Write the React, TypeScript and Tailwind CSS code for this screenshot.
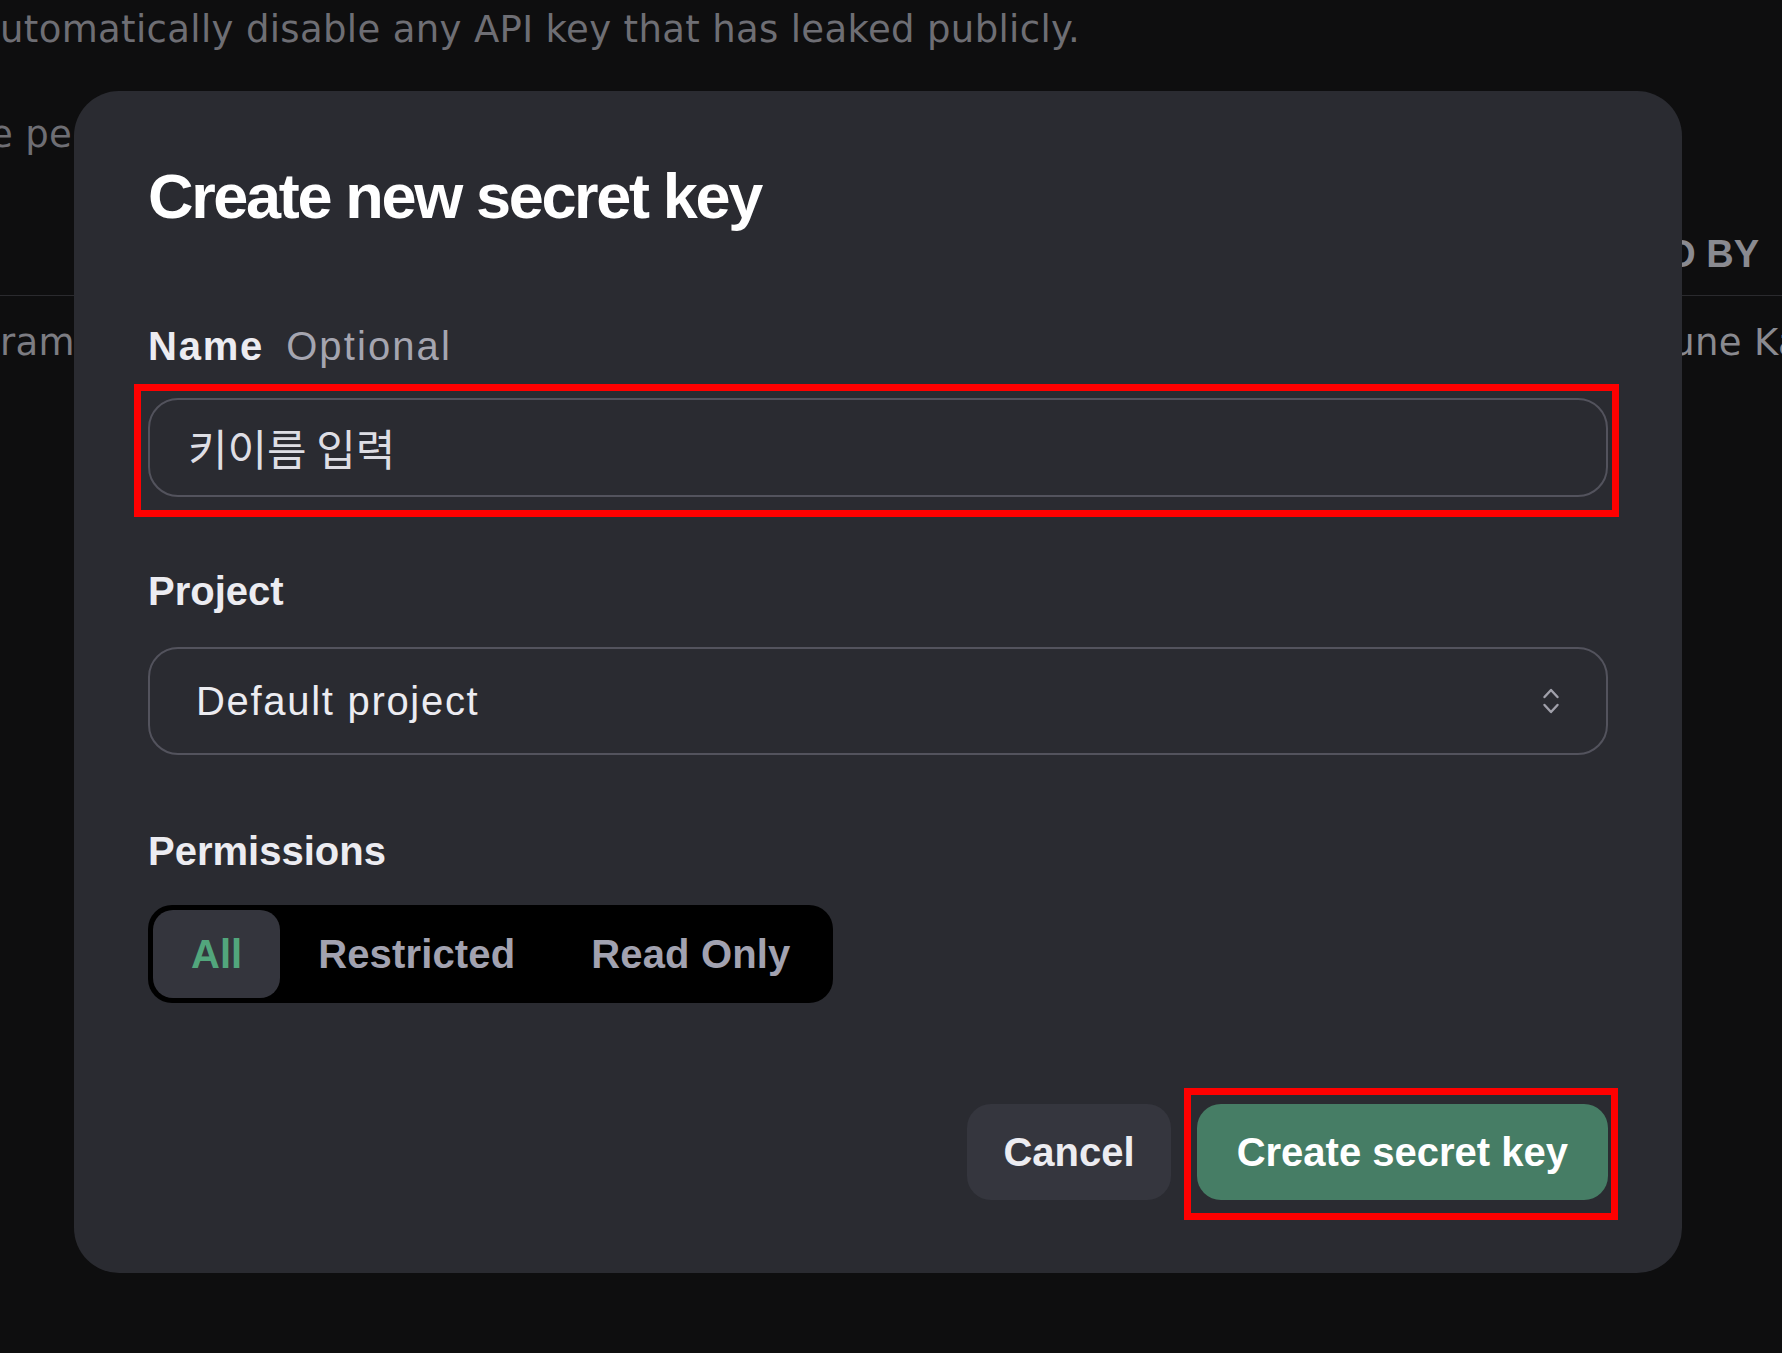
import React from "react";

function Chevrons() {
  return (
    <svg width="20" height="30" viewBox="0 0 20 30" fill="none" stroke="#a0a0aa" strokeWidth="2.4" strokeLinecap="round" strokeLinejoin="round">
      <polyline points="3.5,11 10,4 16.5,11" />
      <polyline points="3.5,19 10,26 16.5,19" />
    </svg>
  );
}

export default function App() {
  return (
    <div className="relative h-[1353px] w-[1782px] overflow-hidden bg-[#0e0e0f] font-['DejaVu_Sans',sans-serif]">
      {/* Background page content */}
      <div className="pt-[8px] text-[37px] tracking-[0.35px] text-[#6e6e74]">
        <div className="h-[44px] leading-[44px] whitespace-nowrap ml-[-23px]">
          automatically disable any API key that has leaked publicly.
        </div>
        <div className="mt-[61px] h-[44px] w-[74px] overflow-hidden leading-[44px] whitespace-nowrap">
          <div className="ml-[-10px]">e per</div>
        </div>
        <div className="mt-[75px] flex justify-end pr-[23px] pb-[19px] border-b border-[#2a2a2e]">
          <div className="h-[44px] leading-[44px] text-[38px] font-bold tracking-normal text-[#8a8a90] font-['Liberation_Sans',Arial,sans-serif] whitespace-nowrap">
            CREATED BY
          </div>
        </div>
        <div className="mt-[25px] flex h-[44px] leading-[44px] whitespace-nowrap">
          <div className="w-[74px] shrink-0 overflow-hidden text-[#7c7c82]">ram</div>
          <div className="flex-1" />
          <div className="w-[122px] shrink-0 overflow-hidden text-[#8a8a90]">June Kang</div>
        </div>
      </div>

      {/* Modal */}
      <div className="absolute left-[74px] top-[91px] w-[1608px] h-[1182px] rounded-[45px] bg-[#2a2b31] px-[74px] pt-[65px] pb-[73px] flex flex-col font-['Liberation_Sans',Arial,sans-serif]">
        <h1 className="h-[80px] leading-[80px] text-[63px] font-bold tracking-[-0.037em] text-white whitespace-nowrap">
          Create new secret key
        </h1>

        <div className="mt-[86px] flex h-[48px] leading-[48px] text-[40px] whitespace-nowrap">
          <span className="font-bold tracking-[1.8px] text-[#ececf1]">Name</span>
          <span className="ml-[22px] tracking-[2.1px] text-[#a5a5b0]">Optional</span>
        </div>

        <div className="relative mt-[28px]">
          <div className="flex h-[99px] items-center rounded-[30px] border-2 border-[#53535d] px-[38px]">
            <span className="text-[43px] text-[#dedee4] font-['Noto_Sans_CJK_KR',sans-serif]">키이름 입력</span>
          </div>
          <div className="pointer-events-none absolute left-[-14px] right-[-11px] top-[-14px] bottom-[-20px] border-[7px] border-[#ff0000]" />
        </div>

        <div className="mt-[70px] h-[48px] leading-[48px] text-[40px] font-bold text-[#ececf1]">Project</div>

        <div className="mt-[32px] flex h-[108px] items-center justify-between rounded-[30px] border-2 border-[#53535d] pl-[46px] pr-[45px]">
          <span className="text-[40px] tracking-[1.7px] text-[#ececf1] whitespace-nowrap">Default project</span>
          <Chevrons />
        </div>

        <div className="mt-[72px] h-[48px] leading-[48px] text-[40px] font-bold text-[#ececf1]">Permissions</div>

        <div className="mt-[30px] flex">
          <div className="flex h-[98px] items-center rounded-[24px] bg-black p-[5px] text-[40px] font-bold whitespace-nowrap">
            <div className="flex h-[88px] items-center rounded-[20px] bg-[#34353d] px-[38px] text-[#52a67c]">All</div>
            <div className="flex h-[88px] items-center px-[38px] tracking-[0.15px] text-[#a2a2b0]">Restricted</div>
            <div className="flex h-[88px] items-center px-[38px] tracking-[0.15px] text-[#a2a2b0]">Read Only</div>
          </div>
        </div>

        <div className="mt-auto flex justify-end gap-[26px]">
          <div className="flex h-[96px] items-center rounded-[24px] bg-[#35363e] px-[36px] text-[40px] font-bold text-[#ececf1]">
            Cancel
          </div>
          <div className="relative">
            <div className="flex h-[96px] items-center rounded-[24px] bg-[#467d65] px-[40px] text-[40px] font-bold text-white whitespace-nowrap">
              Create secret key
            </div>
            <div className="pointer-events-none absolute left-[-13px] right-[-10px] top-[-16px] bottom-[-20px] border-[7px] border-[#ff0000]" />
          </div>
        </div>
      </div>
    </div>
  );
}
